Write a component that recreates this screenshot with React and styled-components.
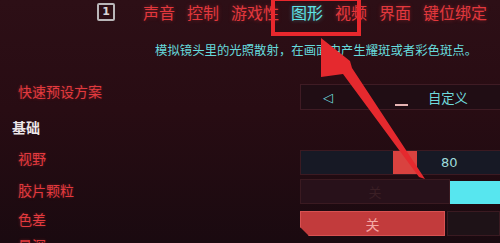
import React from 'react';
import styled, { createGlobalStyle } from 'styled-components';

const GlobalStyle = createGlobalStyle`
  html, body {
    margin: 0;
    padding: 0;
    background: #1c0a10;
  }
  body {
    font-family: "Noto Sans CJK SC", "Noto Sans", sans-serif;
  }
`;

const Screen = styled.div`
  position: relative;
  width: 500px;
  height: 243px;
  overflow: hidden;
  display: flex;
  flex-direction: column;
  background: linear-gradient(180deg, #2d0f16 0%, #280c13 45%, #1a0a10 100%);
`;

const TopNav = styled.nav`
  display: flex;
  align-items: center;
  gap: 12px;
  height: 24px;
  padding-left: 97px;
`;

const KeyBadge = styled.span`
  box-sizing: border-box;
  width: 18px;
  height: 18px;
  margin-right: 16px;
  border: 2px solid #b9b6b8;
  border-radius: 2px;
  color: #d8d4d6;
  font-family: "DejaVu Sans", sans-serif;
  font-size: 11px;
  font-weight: 700;
  line-height: 14px;
  text-align: center;
`;

const Tab = styled.span`
  font-size: 16px;
  line-height: 24px;
  color: ${({ active }) => (active ? '#5fe3e6' : '#e2383d')};
  text-shadow: 0 0 4px ${({ active }) => (active ? 'rgba(95,227,230,0.45)' : 'rgba(226,56,61,0.45)')};
`;

const Description = styled.p`
  margin: 18px 0 0;
  padding-left: 155px;
  font-size: 12.4px;
  line-height: 16px;
  color: #66dadc;
  white-space: nowrap;
`;

const Row = styled.div`
  display: grid;
  grid-template-columns: 300px 200px;
  align-items: start;
  height: ${({ h }) => h || 25}px;
  margin-top: ${({ top }) => top || 0}px;
`;

const Label = styled.span`
  padding-left: 18px;
  padding-top: ${({ offset }) => offset || 0}px;
  font-size: 14px;
  line-height: 15px;
  color: #e23a3e;
  text-shadow: 0 0 3px rgba(226, 58, 62, 0.4);
`;

const Divider = styled.div`
  height: 2px;
  margin: 3px 0 0 5px;
  background: #6e5b61;
`;

const SectionTitle = styled.h3`
  margin: 7px 0 0;
  padding-left: 12px;
  font-size: 14px;
  line-height: 15px;
  font-weight: 700;
  color: #ece6e8;
`;

const Selector = styled.div`
  box-sizing: border-box;
  display: flex;
  align-items: center;
  height: 26px;
  padding-left: 22px;
  background: #200d14;
  border: 1px solid #3f1b24;
  border-right: none;
`;

const SelectorArrow = styled.span`
  font-family: "DejaVu Sans", sans-serif;
  font-size: 13px;
  color: #6fd6da;
`;

const SelectorMark = styled.span`
  align-self: flex-end;
  width: 13px;
  height: 2px;
  margin: 0 0 3px 62px;
  background: #e7b3b3;
`;

const SelectorValue = styled.span`
  margin-left: 20px;
  font-size: 13.3px;
  color: #6fd9dc;
`;

const Slider = styled.div`
  box-sizing: border-box;
  display: flex;
  align-items: stretch;
  height: 25px;
  background: #171925;
  border: 1px solid #3b1a22;
  border-right: none;
`;

const Thumb = styled.span`
  width: 24px;
  background: #d9423f;
`;

const SliderValue = styled.span`
  margin-left: 24px;
  align-self: center;
  font-family: "DejaVu Sans", sans-serif;
  font-size: 13px;
  color: #9fdcdc;
`;

const SplitControl = styled.div`
  display: flex;
  gap: ${({ gap }) => gap || 0}px;
  height: 25px;
`;

const DarkCell = styled.div`
  box-sizing: border-box;
  display: flex;
  align-items: center;
  justify-content: center;
  width: ${({ w }) => (w ? `${w}px` : 'auto')};
  flex: ${({ w }) => (w ? 'none' : '1')};
  background: ${({ bg }) => bg || '#28111a'};
  border: 1px solid #3a1a21;
  font-size: 13px;
  color: #3b1f25;
`;

const CyanBlock = styled.div`
  flex: 1;
  margin: 2px 0 0;
  background: #57e6ef;
`;

const ToggleButton = styled.div`
  box-sizing: border-box;
  display: flex;
  align-items: center;
  justify-content: center;
  width: 145px;
  background: #c23b3c;
  border: 1px solid #d85252;
  clip-path: polygon(0 0, 100% 0, 100% 100%, 9px 100%, 0 calc(100% - 9px));
  font-size: 14px;
  color: #f5aaa5;
`;

const HighlightBox = styled.div`
  position: absolute;
  left: 271px;
  top: -3px;
  width: 90px;
  height: 39px;
  box-sizing: border-box;
  border: 4px solid #e8282d;
`;

const Overlay = styled.svg`
  position: absolute;
  left: 0;
  top: 0;
  pointer-events: none;
`;

const tabs = ['声音', '控制', '游戏性', '图形', '视频', '界面', '键位绑定'];

export default function App() {
  const fov = 80;
  const thumbOffset = Math.round((fov / 80) * 92);

  return (
    <>
      <GlobalStyle />
      <Screen>
        <TopNav>
          <KeyBadge>1</KeyBadge>
          {tabs.map((t) => (
            <Tab key={t} active={t === '图形'}>{t}</Tab>
          ))}
        </TopNav>

        <Description>模拟镜头里的光照散射，在画面中产生耀斑或者彩色斑点。</Description>

        <Row h={26} top={26}>
          <Label offset={-1}>快速预设方案</Label>
          <Selector>
            <SelectorArrow>◁</SelectorArrow>
            <SelectorMark />
            <SelectorValue>自定义</SelectorValue>
          </Selector>
        </Row>

        <Divider />
        <SectionTitle>基础</SectionTitle>

        <Row top={15}>
          <Label offset={1}>视野</Label>
          <Slider>
            <Thumb style={{ marginLeft: thumbOffset }} />
            <SliderValue>{fov}</SliderValue>
          </Slider>
        </Row>

        <Row top={4}>
          <Label offset={4}>胶片颗粒</Label>
          <SplitControl>
            <DarkCell w={150}>关</DarkCell>
            <CyanBlock />
          </SplitControl>
        </Row>

        <Row top={7}>
          <Label offset={1}>色差</Label>
          <SplitControl gap={2}>
            <ToggleButton>关</ToggleButton>
            <DarkCell bg="#1e1217" />
          </SplitControl>
        </Row>

        <Row top={2}>
          <Label>景深</Label>
        </Row>

        <HighlightBox />
        <Overlay width="500" height="243" viewBox="0 0 500 243">
          <polygon
            points="321,38 350,61 352,68 425,179 419,177 343,74 321,77"
            fill="#e5292e"
          />
        </Overlay>
      </Screen>
    </>
  );
}
